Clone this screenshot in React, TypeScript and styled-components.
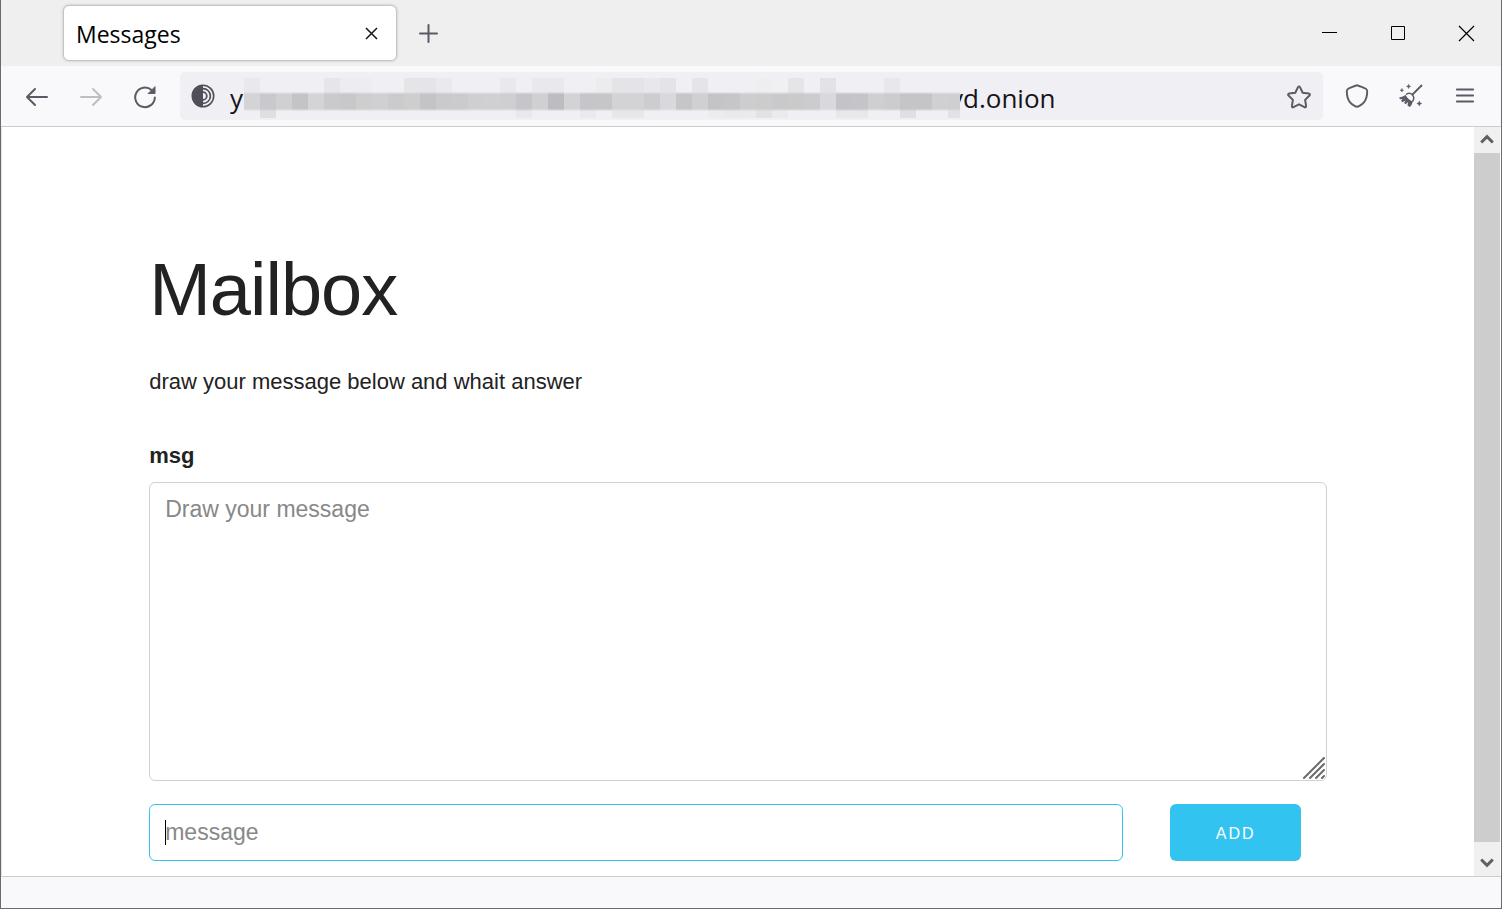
import React from "react";
import styled, { createGlobalStyle } from "styled-components";

const GlobalStyle = createGlobalStyle`
  * { box-sizing: border-box; }
  body { margin: 0; background: #fff; color: #222; font-family: "Liberation Sans", Arial, sans-serif; }
  button, input, textarea { font-family: inherit; margin: 0; }
`;

const BrowserWindow = styled.div`
  display: flex;
  flex-direction: column;
  min-height: 100vh;
  border: 1px solid #6b6b6b;
  border-top: 0;
`;

const TabBar = styled.header`
  display: flex;
  align-items: flex-start;
  height: 66px;
  padding-left: 62px;
  background: #efefef;
`;

const Tab = styled.div`
  display: flex;
  align-items: center;
  justify-content: space-between;
  width: 334px;
  height: 56px;
  margin-top: 5px;
  padding: 0 13px 0 12px;
  border: 1px solid #c4c4c8;
  border-radius: 6px;
  background: #fff;
  box-shadow: 0 0 3px rgba(0, 0, 0, 0.2);
`;

const TabTitle = styled.span`
  padding-top: 2px;
  font: 23px/32px "Open Sans", "Noto Sans", sans-serif;
  color: #000;
`;

const IconButton = styled.button<{ $width: number; $height: number; $color?: string }>`
  display: flex;
  flex: none;
  align-items: center;
  justify-content: center;
  width: ${(p) => p.$width}px;
  height: ${(p) => p.$height}px;
  padding: 0;
  border: 0;
  background: transparent;
  color: ${(p) => p.$color ?? "#5b5b66"};
`;

const WindowControls = styled.div`
  display: flex;
  margin-left: auto;
`;

const Toolbar = styled.nav`
  display: flex;
  align-items: center;
  height: 61px;
  padding: 0 9px;
  border-bottom: 1px solid #ccc;
  background: #f9f9fb;
`;

const UrlBar = styled.div`
  display: flex;
  flex: 1;
  align-items: center;
  min-width: 0;
  height: 48px;
  margin: 0 7px 0 8px;
  padding: 0 6px 0 11px;
  border-radius: 5px;
  background: #f0f0f4;
`;

const Address = styled.div`
  display: flex;
  flex: 1;
  align-items: center;
  min-width: 0;
  margin-left: 15px;
`;

const AddressInput = styled.input<{ $width: number; $tucked?: boolean }>`
  width: ${(p) => p.$width}px;
  height: 44px;
  margin-left: ${(p) => (p.$tucked ? "-10px" : "0")};
  padding: 4px 0 0;
  border: 0;
  outline: 0;
  background: transparent;
  color: #15141a;
  font: 26px/36px "Open Sans", "Noto Sans", sans-serif;
`;

const Mosaic = styled.svg`
  position: relative;
  z-index: 1;
  flex: 0 1 716px;
  min-width: 0;
  height: 44px;
`;

const Viewport = styled.div`
  display: flex;
  flex: 1;
  border-bottom: 1px solid #ccc;
  border-left: 1px solid #e2e2e2;
`;

const Page = styled.main`
  flex: 1;
  min-width: 0;
  padding: 118px 0 15px;
`;

const Container = styled.div`
  width: 80%;
  margin: 0 auto;
`;

const Heading = styled.h1`
  margin: 0 0 29px;
  font-size: 74px;
  font-weight: 400;
  line-height: 90px;
  letter-spacing: -1px;
`;

const Intro = styled.p`
  margin: 0 0 38px;
  font-size: 22px;
  line-height: 36px;
`;

const Label = styled.label`
  display: block;
  margin-bottom: 8px;
  font-size: 22px;
  font-weight: 700;
  line-height: 36px;
`;

const TextAreaWrap = styled.div`
  position: relative;
  display: flex;
  margin-bottom: 23px;
`;

const MessageArea = styled.textarea`
  width: 100%;
  height: 299px;
  padding: 8px 15px;
  border: 1px solid #d1d1d1;
  border-radius: 6px;
  outline: 0;
  resize: none;
  background: #fff;
  color: #222;
  font-size: 23px;
  line-height: 36px;
  &::placeholder { color: #888; opacity: 1; }
`;

const Grip = styled.svg`
  position: absolute;
  right: 1px;
  bottom: 1px;
`;

const SendRow = styled.div`
  display: flex;
  gap: 4%;
`;

const InputWrap = styled.div`
  position: relative;
  width: 82.7%;
`;

const MessageInput = styled.input`
  display: block;
  width: 100%;
  height: 57px;
  padding: 0 15px;
  border: 1px solid #33c3f0;
  border-radius: 6px;
  outline: 0;
  background: #fff;
  color: #222;
  font-size: 23px;
  &::placeholder { color: #888; opacity: 1; }
`;

const Caret = styled.span`
  position: absolute;
  top: 16px;
  left: 16px;
  width: 1px;
  height: 25px;
  background: #000;
`;

const AddButton = styled.button`
  flex: none;
  width: 131px;
  height: 57px;
  padding: 2px 0 0;
  border: 0;
  border-radius: 6px;
  background: #33c3f0;
  color: #fff;
  font-size: 16px;
  letter-spacing: 2px;
`;

const ScrollBar = styled.div`
  display: flex;
  flex: none;
  flex-direction: column;
  width: 27px;
  border-right: 1px solid #fff;
  background: #f0f0f0;
`;

const ScrollThumb = styled.div`
  flex: 1;
  margin-bottom: 8px;
  background: #cdcdcd;
  box-shadow: 0 0 0 #cdcdcd;
`;

const StatusBar = styled.footer`
  height: 31px;
  background: #f9f9fb;
`;

const CELL = 16;
const BASE = "#f0f0f4";
const topCells: Record<number, string> = {
  0: "#e9e9ed", 5: "#e6e6ea", 6: "#edecf1", 7: "#edecf1", 10: "#e5e5e9", 11: "#e5e5e9", 12: "#eaeaee",
  16: "#e9e9ed", 18: "#e9e9ed", 19: "#e9e9ed", 22: "#ececee", 23: "#e4e4e8", 24: "#e4e4e8", 25: "#e8e8ec",
  26: "#e4e4e8", 28: "#e5e5e9", 32: "#eeeef1", 34: "#e5e5e9", 36: "#e3e3e7", 40: "#e8e8ec",
};
const bottomCells: Record<number, string> = {
  1: "#dfdfe2", 17: "#e9e9ed", 21: "#eaeaee", 23: "#e7e7ea", 24: "#e7e7ea", 29: "#ececef", 30: "#e9e9ec",
  31: "#eaeaed", 32: "#e2e2e5", 33: "#eaeaee", 37: "#e8e8eb", 38: "#e8e8eb", 41: "#e0e0e4", 44: "#e3e3e7",
};
const middleCells = (
  "d4d4d6 c9c9cd d0d0d3 c4c4c7 d4d4d7 cacacd c8c8cb cececf d0d0d2 cbcbcd cececf c4c4c7 cacacc cbcbce cfcfd1 " +
  "d0d0d2 cfcfd1 c6c5ca d0d0d3 bdbcc1 d3d3d5 c6c5c9 c6c6c8 d3d3d6 d3d3d5 cdcdcf d9d9dd c6c6c9 d0d0d2 c4c4c8 " +
  "c6c6c9 cdcdcf cccccd c9c9cb cacacb ccccce d9d8dd c4c4c8 c5c5c9 cfcfd1 cccccf c5c5c7 c5c5c7 d0d0d2 cfcfd1"
).split(" ");

const RedactedHost = () => (
  <Mosaic viewBox="0 0 716 44" preserveAspectRatio="none" shapeRendering="crispEdges" aria-hidden="true">
    <rect width="716" height="44" fill={BASE} />
    {middleCells.map((color, i) => {
      const x = i * CELL;
      return (
        <g key={i}>
          {topCells[i] && <rect x={x} y="4" width={CELL} height="16" fill={topCells[i]} />}
          {bottomCells[i] && <rect x={x} y="34" width={CELL} height="10" fill={bottomCells[i]} />}
          <rect x={x} y="18" width={CELL} height="19" fill={`#${color}`} opacity="0.3" />
          <rect x={x} y="19" width={CELL} height="17" fill={`#${color}`} opacity="0.5" />
          <rect x={x} y="20" width={CELL} height="15" fill={`#${color}`} />
        </g>
      );
    })}
  </Mosaic>
);

const line = { fill: "none", stroke: "currentColor", strokeLinecap: "round", strokeLinejoin: "round" } as const;

const ArrowIcon = ({ flip }: { flip?: boolean }) => (
  <svg width="24" height="24" viewBox="0 0 24 24" {...line} strokeWidth="2">
    <path d={flip ? "M2 13h20M14 5l8 8-8 8" : "M22 13H2M10 5l-8 8 8 8"} />
  </svg>
);

const ReloadIcon = () => (
  <svg width="24" height="26" viewBox="0 0 24 26" {...line} strokeWidth="2">
    <path d="M18.500 7A9.800 9.800 0 1 0 21.800 14.500" />
    <path d="M22 4v6.500h-6.500z" fill="currentColor" strokeWidth="1" />
  </svg>
);

const OnionIcon = () => (
  <svg width="24" height="24" viewBox="0 0 24 24" fill="none" stroke="#4f4f59">
    <circle cx="12" cy="12" r="10.7" strokeWidth="1.6" />
    <path d="M12 1a11 11 0 0 0 0 22z" fill="#4f4f59" stroke="none" />
    <path d="M12 4.6a7.4 7.4 0 0 1 0 14.800M12 8.200a3.800 3.800 0 0 1 0 7.600" strokeWidth="1.7" />
  </svg>
);

const StarIcon = () => (
  <svg width="26" height="28" viewBox="0 -2 26 28" {...line} strokeWidth="2">
    <path d="M12 3.1c.4-.9 1.6-.9 2 0l2.7 5.6 6.2.9c1 .1 1.3 1.2.6 1.9l-4.4 4.4 1 6.1c.2 1-.8 1.7-1.6 1.2L13 20.3l-5.5 2.9c-.8.5-1.8-.2-1.6-1.2l1-6.1-4.4-4.4c-.7-.7-.4-1.8.6-1.900l6.200-.9z" />
  </svg>
);

const ShieldIcon = () => (
  <svg width="24" height="24" viewBox="0 0 24 24" {...line} strokeWidth="1.9">
    <path d="M12 1.2c.7 0 8.500 3.300 9.200 3.900.7.6 1 1.300 1 2.200 0 5.200-1.200 8.600-3.300 11-1.900 2.200-5.600 4.500-6.900 4.500s-5-2.300-6.900-4.500c-2.100-2.400-3.300-5.800-3.300-11 0-.9.3-1.600 1-2.200.7-.6 8.500-3.900 9.200-3.900z" />
  </svg>
);

const BroomIcon = () => (
  <svg width="24" height="24" viewBox="0 0 24 24" fill="currentColor">
    <path d="M22.500 1.500L13.500 10.500" {...line} strokeWidth="1.800" />
    <path d="M7.500 10.200c2-1.200 4.500-.9 6 .7 1.500 1.700 1.500 4.200.2 6.300" {...line} strokeWidth="1.500" />
    <path d="M6.500 10.800c-1.500 1.600-3.700 2.300-6.300 2.600l.6 1.900 2.600-.3-1.300 1.800 1.300 1.400 3.200-1.700-1.500 2.600 1.500 1.100 2.500-2.200-.6 3.500 2.300 1.500c1.500-1.500 2.600-3.500 3-5.600-2.700-.6-5.900-3.400-7.300-6.600z" />
    <path d="M9.600.3l.6 1.500 1.500.6-1.500.6-.6 1.500-.6-1.500-1.500-.6 1.500-.6zM2.900 4.400l.5 1.300 1.300.5-1.300.5-.5 1.300-.5-1.300-1.300-.5 1.300-.5zM20.300 17l.7 1.800 1.800.7-1.800.7-.7 1.800-.7-1.800-1.800-.7 1.800-.7z" stroke="currentColor" strokeWidth=".5" />
  </svg>
);

const MenuIcon = () => (
  <svg width="24" height="24" viewBox="0 0 24 24" {...line} strokeWidth="1.8">
    <path d="M3.800 5.500h16.400M3.800 11.500h16.400M3.800 17.500h16.400" />
  </svg>
);

const CrossIcon = ({ size, weight }: { size: number; weight: number }) => (
  <svg width={size} height={size} viewBox={`0 0 ${size} ${size}`} stroke="currentColor" strokeWidth={weight}>
    <path d={`M1 1L${size - 1} ${size - 1}M${size - 1} 1L1 ${size - 1}`} />
  </svg>
);

const ChevronIcon = ({ down }: { down?: boolean }) => (
  <svg width="14" height="12" viewBox="0 0 14 12" fill="none" stroke="#606060" strokeWidth="3">
    <path d={down ? "M1.200 2.500L7 8.300l5.800-5.800" : "M1.200 8.500L7 2.700l5.800 5.800"} />
  </svg>
);

export default function App() {
  return (
    <>
      <GlobalStyle />
      <BrowserWindow>
        <TabBar>
          <Tab>
            <TabTitle>Messages</TabTitle>
            <IconButton $width={24} $height={24} $color="#15141a" aria-label="Close tab">
              <CrossIcon size={13} weight={1.5} />
            </IconButton>
          </Tab>
          <IconButton $width={64} $height={66} aria-label="New tab">
            <svg width="20" height="20" viewBox="0 0 20 20" {...line} strokeWidth="2">
              <path d="M9.500 2v17M1 10.500h17" />
            </svg>
          </IconButton>
          <WindowControls>
            <IconButton $width={69} $height={66} $color="#000" aria-label="Minimize">
              <svg width="17" height="16" viewBox="0 0 17 16"><path d="M2 7.500h15" stroke="currentColor" /></svg>
            </IconButton>
            <IconButton $width={69} $height={66} $color="#000" aria-label="Maximize">
              <svg width="16" height="15" viewBox="0 0 16 15" fill="none"><path d="M1.500.5h13v13h-13z" stroke="currentColor" /></svg>
            </IconButton>
            <IconButton $width={69} $height={66} $color="#000" aria-label="Close window">
              <CrossIcon size={17} weight={1.2} />
            </IconButton>
          </WindowControls>
        </TabBar>

        <Toolbar>
          <IconButton $width={54} $height={48} aria-label="Back"><ArrowIcon /></IconButton>
          <IconButton $width={54} $height={48} $color="#bebec3" aria-label="Forward"><ArrowIcon flip /></IconButton>
          <IconButton $width={54} $height={48} aria-label="Reload"><ReloadIcon /></IconButton>
          <UrlBar>
            <OnionIcon />
            <Address>
              <AddressInput $width={14} defaultValue="y" aria-label="Address start" />
              <RedactedHost />
              <AddressInput $width={120} $tucked defaultValue="yd.onion" aria-label="Address end" />
            </Address>
            <IconButton $width={36} $height={48} aria-label="Bookmark"><StarIcon /></IconButton>
          </UrlBar>
          <IconButton $width={54} $height={48} aria-label="Security level"><ShieldIcon /></IconButton>
          <IconButton $width={54} $height={48} aria-label="New identity"><BroomIcon /></IconButton>
          <IconButton $width={54} $height={48} aria-label="Menu"><MenuIcon /></IconButton>
        </Toolbar>

        <Viewport>
          <Page>
            <Container>
              <Heading>Mailbox</Heading>
              <Intro>draw your message below and whait answer</Intro>
              <Label htmlFor="msg">msg</Label>
              <TextAreaWrap>
                <MessageArea id="msg" placeholder="Draw your message" />
                <Grip width="24" height="24" viewBox="0 0 24 24" stroke="#6a6a6a" strokeWidth="2" strokeLinecap="round" aria-hidden="true">
                  <path d="M2 22L22 2M8 22L22 8M14 22l8-8M20 22l2-2" />
                </Grip>
              </TextAreaWrap>
              <SendRow>
                <InputWrap>
                  <MessageInput placeholder="message" aria-label="message" />
                  <Caret />
                </InputWrap>
                <AddButton type="button">ADD</AddButton>
              </SendRow>
            </Container>
          </Page>
          <ScrollBar>
            <IconButton $width={26} $height={26} aria-label="Scroll up"><ChevronIcon /></IconButton>
            <ScrollThumb />
            <IconButton $width={26} $height={26} aria-label="Scroll down"><ChevronIcon down /></IconButton>
          </ScrollBar>
        </Viewport>
        <StatusBar />
      </BrowserWindow>
    </>
  );
}
